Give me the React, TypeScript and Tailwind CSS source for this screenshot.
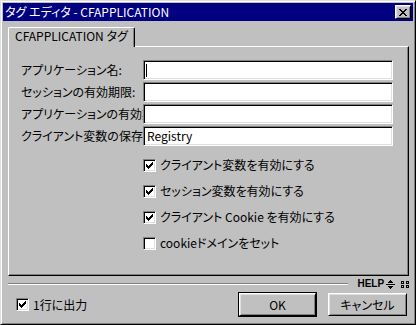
import React from "react";

const raised =
    "bg-[#c0c0c0] border border-t-white border-l-white border-r-black border-b-black shadow-[inset_1px_1px_#dfdfdf,inset_-1px_-1px_#808080]";
const sunken =
    "border border-t-[#808080] border-l-[#808080] border-r-white border-b-white shadow-[inset_1px_1px_#000,inset_-1px_-1px_#dfdfdf]";

function CheckBox({ checked }: { checked: boolean }) {
    return (
        <span className={`relative block w-[13px] h-[13px] shrink-0 bg-white ${sunken}`}>
            {checked && (
                <svg className="absolute left-[2px] top-[2px]" width="7" height="7" viewBox="0 0 7 7" shapeRendering="crispEdges">
                    <rect x="6" y="0" width="1" height="1" />
                    <rect x="5" y="1" width="2" height="1" />
                    <rect x="0" y="2" width="1" height="1" />
                    <rect x="4" y="2" width="3" height="1" />
                    <rect x="0" y="3" width="2" height="1" />
                    <rect x="3" y="3" width="3" height="1" />
                    <rect x="0" y="4" width="5" height="1" />
                    <rect x="1" y="5" width="3" height="1" />
                    <rect x="2" y="6" width="1" height="1" />
                </svg>
            )}
        </span>
    );
}

function FieldRow({ label, value, caret }: { label: string; value?: string; caret?: boolean }) {
    return (
        <div className="flex items-center h-[20px]">
            <div className="w-[122px] h-[18px] overflow-hidden whitespace-nowrap leading-[18px]">{label}</div>
            <div className={`w-[250px] h-[20px] bg-white flex items-center pl-[2px] ${sunken}`}>
                {caret && <span className="block w-[1px] h-[13px] bg-black" />}
                {value && <span className="leading-none pl-[1px]">{value}</span>}
            </div>
        </div>
    );
}

function CheckRow({ label, checked }: { label: string; checked: boolean }) {
    return (
        <div className="flex items-center h-[26px] gap-[4px]">
            <CheckBox checked={checked} />
            <span className="leading-none whitespace-nowrap">{label}</span>
        </div>
    );
}

export default function App() {
    return (
        <div className="w-[416px] h-[325px] bg-[#c0c0c0] border border-t-[#dfdfdf] border-l-[#dfdfdf] border-r-black border-b-black shadow-[inset_1px_1px_#fff,inset_-1px_-1px_#808080] p-[2px] flex flex-col text-[12px] text-black font-['Noto_Sans_CJK_JP','Liberation_Sans',sans-serif] [font-feature-settings:'palt']">
            {/* title bar */}
            <div className="h-[18px] shrink-0 bg-[#000080] flex items-center pl-[2px] pr-[2px] text-white">
                <span className="leading-none whitespace-nowrap">タグ エディタ - CFAPPLICATION</span>
                <div className={`ml-auto w-[16px] h-[14px] flex items-center justify-center ${raised}`}>
                    <svg width="8" height="7" viewBox="0 0 8 7" shapeRendering="crispEdges">
                        <rect x="0" y="0" width="2" height="1" />
                        <rect x="6" y="0" width="2" height="1" />
                        <rect x="1" y="1" width="2" height="1" />
                        <rect x="5" y="1" width="2" height="1" />
                        <rect x="2" y="2" width="4" height="1" />
                        <rect x="3" y="3" width="2" height="1" />
                        <rect x="2" y="4" width="4" height="1" />
                        <rect x="1" y="5" width="2" height="1" />
                        <rect x="5" y="5" width="2" height="1" />
                        <rect x="0" y="6" width="2" height="1" />
                        <rect x="6" y="6" width="2" height="1" />
                    </svg>
                </div>
            </div>

            <div className="flex flex-col pl-[5px] pr-[4px]">
                {/* tab */}
                <div className="mt-[6px] relative z-10 -mb-[1px] w-[127px] h-[20px] bg-[#c0c0c0] border-t border-l border-r border-t-white border-l-white border-r-black rounded-tl-[2px] rounded-tr-[2px] shadow-[inset_-1px_0_#808080] flex items-center pl-[6px] pb-[3px]">
                    <span className="leading-none whitespace-nowrap">CFAPPLICATION タグ</span>
                </div>

                {/* panel */}
                <div className="h-[230px] border border-t-white border-l-white border-r-black border-b-black shadow-[inset_-1px_-1px_#808080] pt-[13px] pl-[12px] flex flex-col">
                    <div className="flex flex-col gap-[2px]">
                        <FieldRow label="アプリケーション名:" caret />
                        <FieldRow label="セッションの有効期限:" />
                        <FieldRow label="アプリケーションの有効期限:" />
                        <FieldRow label="クライアント変数の保存:" value="Registry" />
                    </div>
                    <div className="mt-[6px] ml-[122px] flex flex-col">
                        <CheckRow label="クライアント変数を有効にする" checked />
                        <CheckRow label="セッション変数を有効にする" checked />
                        <CheckRow label="クライアント Cookie を有効にする" checked />
                        <CheckRow label="cookieドメインをセット" checked={false} />
                    </div>
                </div>

                {/* separator + help */}
                <div className="mt-[3px] h-[10px] flex items-center">
                    <div className="w-[342px] h-[2px] border-t border-b border-t-[#808080] border-b-white" />
                    <span className="ml-[9px] text-[10px] font-bold leading-none font-['Liberation_Sans',sans-serif]">HELP</span>
                    <svg className="ml-[2px]" width="9" height="9" viewBox="0 0 9 9" shapeRendering="crispEdges">
                        <rect x="4" y="0" width="1" height="1" />
                        <rect x="3" y="1" width="3" height="1" />
                        <rect x="2" y="2" width="5" height="1" />
                        <rect x="0" y="4" width="9" height="1" />
                        <rect x="2" y="6" width="5" height="1" />
                        <rect x="3" y="7" width="3" height="1" />
                        <rect x="4" y="8" width="1" height="1" />
                    </svg>
                    <svg className="ml-[6px]" width="8" height="7" viewBox="0 0 8 7" shapeRendering="crispEdges" fill="none" stroke="black">
                        <rect x="0.5" y="0.5" width="2" height="2" />
                        <rect x="5.5" y="0.5" width="2" height="2" />
                        <rect x="0.5" y="4.5" width="2" height="2" />
                        <rect x="5.5" y="4.5" width="2" height="2" />
                    </svg>
                </div>

                {/* bottom row */}
                <div className="mt-[3px] h-[25px] flex items-center">
                    <div className="ml-[8px] flex items-center gap-[4px]">
                        <CheckBox checked />
                        <span className="leading-none whitespace-nowrap">1行に出力</span>
                    </div>
                    <div className="ml-auto w-[79px] h-[25px] border border-black">
                        <div className={`w-full h-full flex items-center justify-center ${raised}`}>
                            <span className="leading-none">OK</span>
                        </div>
                    </div>
                    <div className={`ml-[11px] mr-[2px] w-[79px] h-[23px] flex items-center justify-center ${raised}`}>
                        <span className="leading-none">キャンセル</span>
                    </div>
                </div>
            </div>
        </div>
    );
}
